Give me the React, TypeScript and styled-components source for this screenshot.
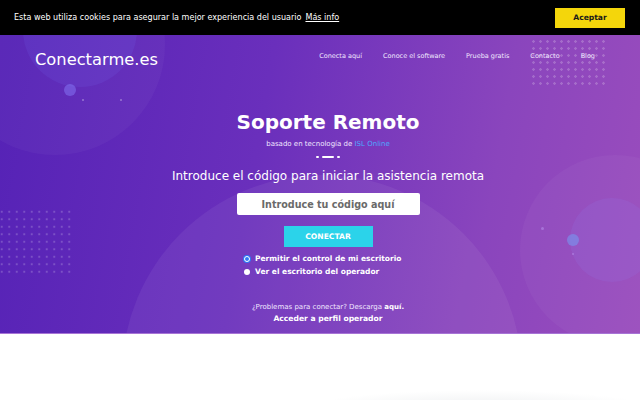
import React from 'react';
import styled, { createGlobalStyle } from 'styled-components';

const GlobalStyle = createGlobalStyle`
  html, body {
    margin: 0;
    padding: 0;
    background: #ffffff;
    font-family: 'DejaVu Sans', 'Liberation Sans', sans-serif;
  }
  * {
    box-sizing: border-box;
  }
`;

const Page = styled.div`
  width: 640px;
  height: 400px;
  overflow: hidden;
  position: relative;
  background: #ffffff;
`;

const CookieBar = styled.div`
  height: 35px;
  background: #000000;
  display: flex;
  align-items: center;
  justify-content: space-between;
  padding: 0 15px 0 14px;
  color: #ffffff;
  font-size: 8.05px;
`;

const CookieText = styled.span``;

const MoreLink = styled.a`
  color: #ffffff;
  text-decoration: underline;
  margin-left: 4px;
`;

const AcceptButton = styled.button`
  width: 70px;
  height: 20px;
  border: none;
  background: #f4d60b;
  color: #1a1a1a;
  font-family: inherit;
  font-weight: bold;
  font-size: 7.6px;
  padding: 0;
`;

const Hero = styled.section`
  position: relative;
  height: 299px;
  overflow: hidden;
  background: linear-gradient(100deg, #5522b6 0%, #6a2fbc 40%, #8a45bd 75%, #9a4dbd 100%);
  border-bottom: 1px solid #a774d6;
  color: #ffffff;
`;

const Circle = styled.div<{ $x: number; $y: number; $r: number; $bg: string }>`
  position: absolute;
  left: ${(p) => p.$x - p.$r}px;
  top: ${(p) => p.$y - p.$r}px;
  width: ${(p) => p.$r * 2}px;
  height: ${(p) => p.$r * 2}px;
  border-radius: 50%;
  background: ${(p) => p.$bg};
  pointer-events: none;
`;

const DotGrid = styled.div<{ $x: number; $y: number; $cols: number; $rows: number; $step: number }>`
  position: absolute;
  left: ${(p) => p.$x}px;
  top: ${(p) => p.$y}px;
  width: ${(p) => p.$cols * p.$step}px;
  height: ${(p) => p.$rows * p.$step}px;
  background-image: radial-gradient(circle, rgba(255, 255, 255, 0.2) 1.1px, transparent 1.5px);
  background-size: ${(p) => p.$step}px ${(p) => p.$step}px;
  pointer-events: none;
`;

const Header = styled.header`
  position: relative;
  display: flex;
  align-items: center;
  justify-content: space-between;
  height: 48px;
  padding: 0 45px 0 35px;
`;

const Logo = styled.div`
  font-size: 16.3px;
  color: #ffffff;
  margin-top: 1px;
`;

const Nav = styled.nav`
  display: flex;
  gap: 21px;
  font-size: 6.5px;
  margin-top: -6px;
`;

const NavItem = styled.a`
  color: #f1e8ff;
  text-decoration: none;
`;

const Content = styled.div`
  position: relative;
  display: flex;
  flex-direction: column;
  align-items: center;
  padding-left: 16px;
  padding-top: 26px;
`;

const Title = styled.h1`
  margin: 0;
  font-size: 20px;
  font-weight: bold;
  line-height: 26px;
`;

const Subtitle = styled.div`
  font-size: 7px;
  line-height: 8px;
  margin-top: 5px;
  color: #f0e6ff;
`;

const IslLink = styled.span`
  color: #4ea8ff;
`;

const Divider = styled.div`
  display: flex;
  gap: 3px;
  margin-top: 8px;
  align-items: center;
`;

const Dash = styled.span<{ $w: number }>`
  width: ${(p) => p.$w}px;
  height: 2px;
  border-radius: 1px;
  background: #ffffff;
`;

const Lead = styled.div`
  font-size: 12px;
  line-height: 14px;
  margin-top: 11px;
`;

const CodeInput = styled.input`
  width: 183px;
  height: 22px;
  margin-top: 10px;
  border: none;
  border-radius: 2px;
  background: #ffffff;
  text-align: center;
  font-family: inherit;
  font-weight: bold;
  font-size: 9.6px;
  color: #666;
  outline: none;
  &::placeholder {
    color: #6a6a6a;
  }
`;

const ConnectButton = styled.button`
  width: 89px;
  height: 21px;
  margin-top: 11px;
  border: none;
  background: #2bd3ea;
  color: #ffffff;
  font-family: inherit;
  font-weight: bold;
  font-size: 7.6px;
  padding: 0;
`;

const Options = styled.div`
  display: flex;
  flex-direction: column;
  gap: 4px;
  margin-top: 7px;
  align-self: flex-start;
  margin-left: 228px;
`;

const Option = styled.label`
  display: flex;
  align-items: center;
  gap: 5px;
  font-size: 7.5px;
  line-height: 9px;
  font-weight: bold;
`;

const RadioDot = styled.span<{ $checked?: boolean }>`
  width: 6px;
  height: 6px;
  border-radius: 50%;
  background: ${(p) => (p.$checked ? '#2f7bf5' : '#ffffff')};
  border: ${(p) => (p.$checked ? '1.4px solid #ffffff' : 'none')};
  box-shadow: ${(p) => (p.$checked ? '0 0 0 1px #2f7bf5' : 'none')};
`;

const Help = styled.div`
  font-size: 7px;
  line-height: 8px;
  margin-top: 27px;
  color: #f0e6ff;
`;

const HelpStrong = styled.b`
  color: #ffffff;
`;

const OperatorLink = styled.a`
  font-size: 7.6px;
  line-height: 9px;
  font-weight: bold;
  margin-top: 3px;
  color: #ffffff;
`;

const Below = styled.div`
  position: relative;
  height: 66px;
`;

const Shade = styled.div`
  position: absolute;
  right: -20px;
  bottom: -30px;
  width: 360px;
  height: 40px;
  border-radius: 50%;
  background: radial-gradient(ellipse at center, rgba(200, 205, 210, 0.35), transparent 70%);
`;

export default function App() {
  return (
    <Page>
      <GlobalStyle />
      <CookieBar>
        <CookieText>
          Esta web utiliza cookies para asegurar la mejor experiencia del usuario
          <MoreLink>Más info</MoreLink>
        </CookieText>
        <AcceptButton>Aceptar</AcceptButton>
      </CookieBar>
      <Hero>
        <Circle $x={55} $y={10} $r={110} $bg="rgba(255,255,255,0.035)" />
        <Circle $x={80} $y={-5} $r={57} $bg="rgba(120,120,255,0.12)" />
        <Circle $x={70} $y={55} $r={6} $bg="rgba(140,130,255,0.45)" />
        <Circle $x={83} $y={65} $r={1.2} $bg="rgba(255,255,255,0.35)" />
        <Circle $x={121} $y={65} $r={1.2} $bg="rgba(255,255,255,0.35)" />
        <Circle $x={322} $y={340} $r={200} $bg="rgba(255,255,255,0.06)" />
        <Circle $x={615} $y={215} $r={95} $bg="rgba(255,255,255,0.035)" />
        <Circle $x={612} $y={205} $r={42} $bg="rgba(150,130,240,0.15)" />
        <Circle $x={573} $y={205} $r={6} $bg="rgba(120,150,240,0.6)" />
        <Circle $x={542} $y={193} $r={1.5} $bg="rgba(200,170,255,0.4)" />
        <Circle $x={573} $y={219} $r={1.2} $bg="rgba(200,170,255,0.4)" />
        <DotGrid $x={530} $y={3} $cols={11} $rows={7} $step={7} />
        <DotGrid $x={-2} $y={173} $cols={10} $rows={9} $step={7.5} />
        <Header>
          <Logo>Conectarme.es</Logo>
          <Nav>
            <NavItem>Conecta aquí</NavItem>
            <NavItem>Conoce el software</NavItem>
            <NavItem>Prueba gratis</NavItem>
            <NavItem>Contacto</NavItem>
            <NavItem>Blog</NavItem>
          </Nav>
        </Header>
        <Content>
          <Title>Soporte Remoto</Title>
          <Subtitle>
            basado en tecnología de <IslLink>ISL Online</IslLink>
          </Subtitle>
          <Divider>
            <Dash $w={3} />
            <Dash $w={12} />
            <Dash $w={3} />
          </Divider>
          <Lead>Introduce el código para iniciar la asistencia remota</Lead>
          <CodeInput placeholder="Introduce tu código aquí" />
          <ConnectButton>CONECTAR</ConnectButton>
          <Options>
            <Option>
              <RadioDot $checked />
              Permitir el control de mi escritorio
            </Option>
            <Option>
              <RadioDot />
              Ver el escritorio del operador
            </Option>
          </Options>
          <Help>
            ¿Problemas para conectar? Descarga <HelpStrong>aquí.</HelpStrong>
          </Help>
          <OperatorLink>Acceder a perfil operador</OperatorLink>
        </Content>
      </Hero>
      <Below>
        <Shade />
      </Below>
    </Page>
  );
}
